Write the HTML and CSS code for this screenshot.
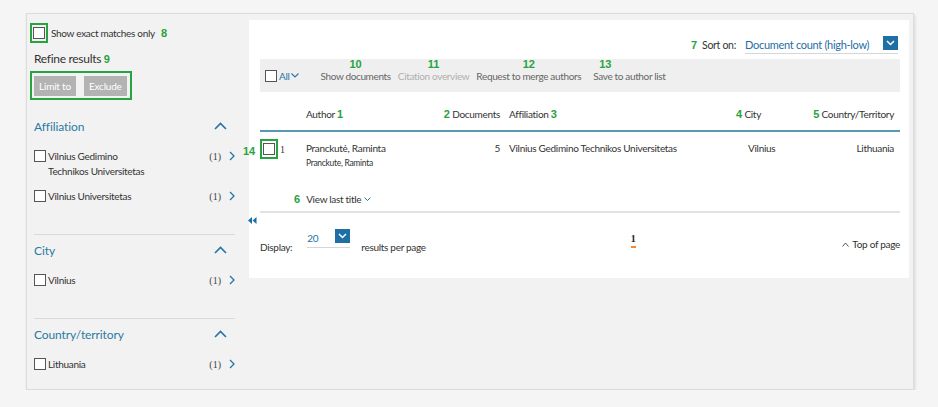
FILE: index.html
```html
<!DOCTYPE html>
<html lang="en">
<head>
    <meta charset="UTF-8">
    <title>Author search results</title>
    <link rel="stylesheet" href="styles.css">
</head>
<body>

<div class="frame">
    <!-- Refine sidebar -->
    <aside class="sidebar">
        <div class="exact">
            <span class="hl hl-check"><span class="cb"></span></span>
            <span class="exact-label">Show exact matches only</span>
            <span class="tag">8</span>
        </div>
        <div class="refine">Refine results <span class="tag">9</span></div>
        <div class="hl btn-group">
            <button class="btn">Limit to</button>
            <button class="btn">Exclude</button>
        </div>

        <section class="facet facet-first">
            <div class="facet-head">
                <span>Affiliation</span>
                <svg class="chev-up" width="13" height="8" viewBox="0 0 13 8"><path d="M1 7 L6.5 1.5 L12 7" fill="none" stroke="#2474a6" stroke-width="1.6"/></svg>
            </div>
            <div class="facet-item">
                <span class="cb"></span>
                <span class="facet-name">Vilnius Gedimino<br>Technikos Universitetas</span>
                <span class="count">(1)</span>
                <svg class="chev-right" width="6" height="10" viewBox="0 0 6 10"><path d="M1 1 L5 5 L1 9" fill="none" stroke="#2474a6" stroke-width="1.3"/></svg>
            </div>
            <div class="facet-item">
                <span class="cb"></span>
                <span class="facet-name">Vilnius Universitetas</span>
                <span class="count">(1)</span>
                <svg class="chev-right" width="6" height="10" viewBox="0 0 6 10"><path d="M1 1 L5 5 L1 9" fill="none" stroke="#2474a6" stroke-width="1.3"/></svg>
            </div>
        </section>

        <section class="facet">
            <div class="facet-head">
                <span>City</span>
                <svg class="chev-up" width="13" height="8" viewBox="0 0 13 8"><path d="M1 7 L6.5 1.5 L12 7" fill="none" stroke="#2474a6" stroke-width="1.6"/></svg>
            </div>
            <div class="facet-item">
                <span class="cb"></span>
                <span class="facet-name">Vilnius</span>
                <span class="count">(1)</span>
                <svg class="chev-right" width="6" height="10" viewBox="0 0 6 10"><path d="M1 1 L5 5 L1 9" fill="none" stroke="#2474a6" stroke-width="1.3"/></svg>
            </div>
        </section>

        <section class="facet">
            <div class="facet-head">
                <span>Country/territory</span>
                <svg class="chev-up" width="13" height="8" viewBox="0 0 13 8"><path d="M1 7 L6.5 1.5 L12 7" fill="none" stroke="#2474a6" stroke-width="1.6"/></svg>
            </div>
            <div class="facet-item">
                <span class="cb"></span>
                <span class="facet-name">Lithuania</span>
                <span class="count">(1)</span>
                <svg class="chev-right" width="6" height="10" viewBox="0 0 6 10"><path d="M1 1 L5 5 L1 9" fill="none" stroke="#2474a6" stroke-width="1.3"/></svg>
            </div>
        </section>
    </aside>

    <!-- Collapse sidebar arrow -->
    <svg class="collapse" width="9" height="7" viewBox="0 0 9 7"><path d="M0 3.5 L4 0 L4 7 Z M4.5 3.5 L8.5 0 L8.5 7 Z" fill="#1d6fa5"/></svg>

    <!-- Results -->
    <main class="results">
        <div class="sort">
            <span class="tag">7</span>
            <span class="sort-label">Sort on:</span>
            <div class="select">
                <span class="select-value">Document count (high-low)</span>
                <span class="select-btn">
                    <svg width="9" height="6" viewBox="0 0 9 6"><path d="M1 1 L4.5 4.5 L8 1" fill="none" stroke="#fff" stroke-width="1.5"/></svg>
                </span>
            </div>
        </div>

        <div class="toolbar">
            <div class="all">
                <span class="cb"></span>
                <span class="all-label">All</span>
                <svg width="8" height="5" viewBox="0 0 8 5"><path d="M0.5 0.5 L4 4 L7.5 0.5" fill="none" stroke="#2474a6" stroke-width="1.1"/></svg>
            </div>
            <span class="action">Show documents<span class="tag tag-top">10</span></span>
            <span class="action action-off">Citation overview<span class="tag tag-top">11</span></span>
            <span class="action">Request to merge authors<span class="tag tag-top">12</span></span>
            <span class="action action-save">Save to author list<span class="tag tag-top tag-left">13</span></span>
        </div>

        <div class="grid head">
            <span></span>
            <span>Author <span class="tag">1</span></span>
            <span class="num"><span class="tag">2</span> Documents</span>
            <span>Affiliation <span class="tag">3</span></span>
            <span><span class="tag">4</span> City</span>
            <span class="num"><span class="tag">5</span> Country/Territory</span>
        </div>

        <div class="grid row">
            <span class="row-check">
                <span class="tag tag-side">14</span>
                <span class="hl hl-check"><span class="cb"></span></span>
                <span class="row-num">1</span>
            </span>
            <span>
                <span class="author">Pranckutė, Raminta</span>
                <span class="author-alt">Pranckute, Raminta</span>
            </span>
            <span class="num">5</span>
            <span>Vilnius Gedimino Technikos Universitetas</span>
            <span class="city">Vilnius</span>
            <span class="num">Lithuania</span>
        </div>

        <div class="last-title">
            <span class="tag">6</span>
            <span>View last title</span>
            <svg width="7" height="4" viewBox="0 0 7 4"><path d="M0.5 0.5 L3.5 3.5 L6.5 0.5" fill="none" stroke="#2474a6" stroke-width="1"/></svg>
        </div>

        <div class="pager">
            <span class="pager-label">Display:</span>
            <div class="per-page">
                <span class="per-page-value">20</span>
                <span class="select-btn">
                    <svg width="9" height="6" viewBox="0 0 9 6"><path d="M1 1 L4.5 4.5 L8 1" fill="none" stroke="#fff" stroke-width="1.5"/></svg>
                </span>
            </div>
            <span class="pager-label pager-results">results per page</span>
            <span class="page-current">1</span>
            <span class="top-link">
                <svg width="7" height="5" viewBox="0 0 7 5"><path d="M0.5 4.5 L3.5 1 L6.5 4.5" fill="none" stroke="#555" stroke-width="1"/></svg>
                Top of page
            </span>
        </div>
    </main>
</div>

</body>
</html>
```

FILE: styles.css
```css
/* Page */
body {
    margin: 0;
    background-color: #f5f5f5;
    font-family: 'Lato', sans-serif;
    font-size: 10px;
    letter-spacing: -0.3px;
    color: #333;
}

.frame {
    position: relative;
    display: flex;
    align-items: flex-start;
    width: 886px;
    height: 375px;
    margin: 13px 0 0 26px;
    background-color: #f2f2f2;
    border: 1px solid #dcdcdc;
    box-shadow: 1px 2px 3px rgba(0, 0, 0, 0.12);
}

/* Annotation numbers and highlight boxes */
.tag {
    color: #26a33f;
    font-family: 'Liberation Sans', sans-serif;
    font-weight: bold;
    font-size: 11px;
    letter-spacing: 0;
}

.hl {
    border: 2px solid #27a341;
}

.cb {
    display: inline-block;
    width: 10px;
    height: 10px;
    border: 1px solid #555;
    background-color: #fff;
    flex: none;
}

/* Sidebar */
.sidebar {
    width: 201px;
    padding: 9px 0 0 7px;
    flex: none;
}

.exact {
    display: flex;
    align-items: center;
    margin-left: -4px;
}

.hl-check {
    display: inline-flex;
    padding: 2px 1px 2px 1px;
}

.exact-label {
    margin: 0 6px 0 3px;
}

.refine {
    margin-top: 8px;
    font-size: 12px;
    line-height: 16px;
}

.btn-group {
    display: inline-flex;
    gap: 8px;
    margin: 4px 0 0 -4px;
    padding: 3px 3px 2px 2px;
}

.btn {
    height: 20px;
    padding: 0 5px;
    border: none;
    background-color: #b3b3b3;
    color: #fff;
    font-family: 'Lato', sans-serif;
    font-size: 10px;
    letter-spacing: -0.2px;
}

.facet {
    border-top: 1px solid #dadada;
    padding: 6px 0 30px;
}

.facet-first {
    border-top: none;
    margin-top: 11px;
}

.facet-head {
    display: flex;
    justify-content: space-between;
    align-items: center;
    height: 18px;
    padding-right: 8px;
    color: #2a7ba3;
    font-size: 12px;
    letter-spacing: -0.1px;
}

.facet-item {
    display: flex;
    align-items: flex-start;
    margin-top: 14px;
    line-height: 15px;
}

.facet-item + .facet-item {
    margin-top: 10px;
}

.facet-item .cb {
    margin-top: 1px;
}

.facet-name {
    flex: 1;
    margin-left: 2px;
}

.count {
    font-family: 'Liberation Serif', serif;
    letter-spacing: 0;
    color: #444;
}

.chev-right {
    margin: 2px 0 0 8px;
}

.collapse {
    position: absolute;
    left: 221px;
    top: 203px;
}

/* Results card */
.results {
    width: 640px;
    height: 258px;
    margin: 6px 0 0 14px;
    padding: 0 9px 0 11px;
    background-color: #fff;
    flex: none;
}

.sort {
    display: flex;
    justify-content: flex-end;
    align-items: center;
    margin-top: 16px;
    padding-right: 2px;
}

.sort-label {
    margin: 0 9px 0 5px;
    font-size: 10.5px;
}

.select {
    display: flex;
    justify-content: space-between;
    align-items: flex-start;
    width: 153px;
    height: 17px;
    border-bottom: 1px solid #d6d6d6;
}

.select-value {
    padding-top: 2px;
    color: #1f6ea5;
    font-size: 11px;
}

.select-btn {
    display: flex;
    align-items: center;
    justify-content: center;
    width: 15px;
    height: 14px;
    background-color: #1d6fa5;
}

.toolbar {
    display: flex;
    align-items: center;
    height: 33px;
    margin-top: 5px;
    background-color: #efefef;
    color: #666;
    letter-spacing: -0.35px;
}

.all {
    display: flex;
    align-items: center;
    margin-left: 5px;
}

.all-label {
    margin: 0 2px 0 2px;
    color: #2474a6;
}

.action {
    position: relative;
    margin-left: 7px;
}

.all + .action {
    margin-left: 21px;
}

.action-save {
    margin-left: 12px;
}

.action-off {
    color: #b0b0b0;
}

.tag-top {
    position: absolute;
    top: -12px;
    left: 0;
    right: 0;
    text-align: center;
}

.tag-left {
    right: auto;
    left: 6px;
}

/* Table */
.grid {
    display: grid;
    grid-template-columns: 46px 120px 74px 236px 62px 96px;
}

.num {
    text-align: right;
}

.grid > span:nth-child(4) {
    padding-left: 9px;
}

.head {
    padding: 14px 0 8px;
    line-height: 16px;
    border-bottom: 2px solid #5a99b1;
}

.row {
    padding-top: 8px;
    line-height: 16px;
}

.row-check {
    position: relative;
    display: flex;
    align-items: flex-start;
    margin-top: -1px;
}

.tag-side {
    position: absolute;
    left: -17px;
    top: 4px;
}

.row-num {
    margin: 3px 0 0 2px;
    font-family: 'Liberation Serif', serif;
}

.author {
    display: block;
}

.author-alt {
    display: block;
    font-size: 8.5px;
    line-height: 14px;
}

.city {
    padding-left: 12px;
}

.last-title {
    display: flex;
    align-items: center;
    gap: 3px;
    margin-left: 34px;
    margin-top: 21px;
    padding-bottom: 4px;
    line-height: 16px;
}

.last-title .tag {
    margin-right: 3px;
}

.pager {
    display: flex;
    align-items: flex-start;
    border-top: 2px solid #e2e2e2;
    padding-top: 16px;
}

.pager-label {
    margin-top: 11px;
    line-height: 14px;
}

.per-page {
    display: flex;
    justify-content: space-between;
    align-items: flex-start;
    width: 43px;
    height: 18px;
    margin-left: 15px;
    border-bottom: 1px solid #d6d6d6;
}

.per-page-value {
    padding-top: 3px;
    color: #1f6ea5;
}

.pager-results {
    margin-left: 11px;
}

.page-current {
    margin: 4px 0 0 205px;
    padding-bottom: 1px;
    border-bottom: 2px solid #f08a3a;
    color: #222;
    font-family: 'Liberation Serif', serif;
    font-weight: bold;
    line-height: 12px;
}

.top-link {
    display: flex;
    align-items: center;
    gap: 3px;
    margin: 9px 0 0 auto;
}
```
